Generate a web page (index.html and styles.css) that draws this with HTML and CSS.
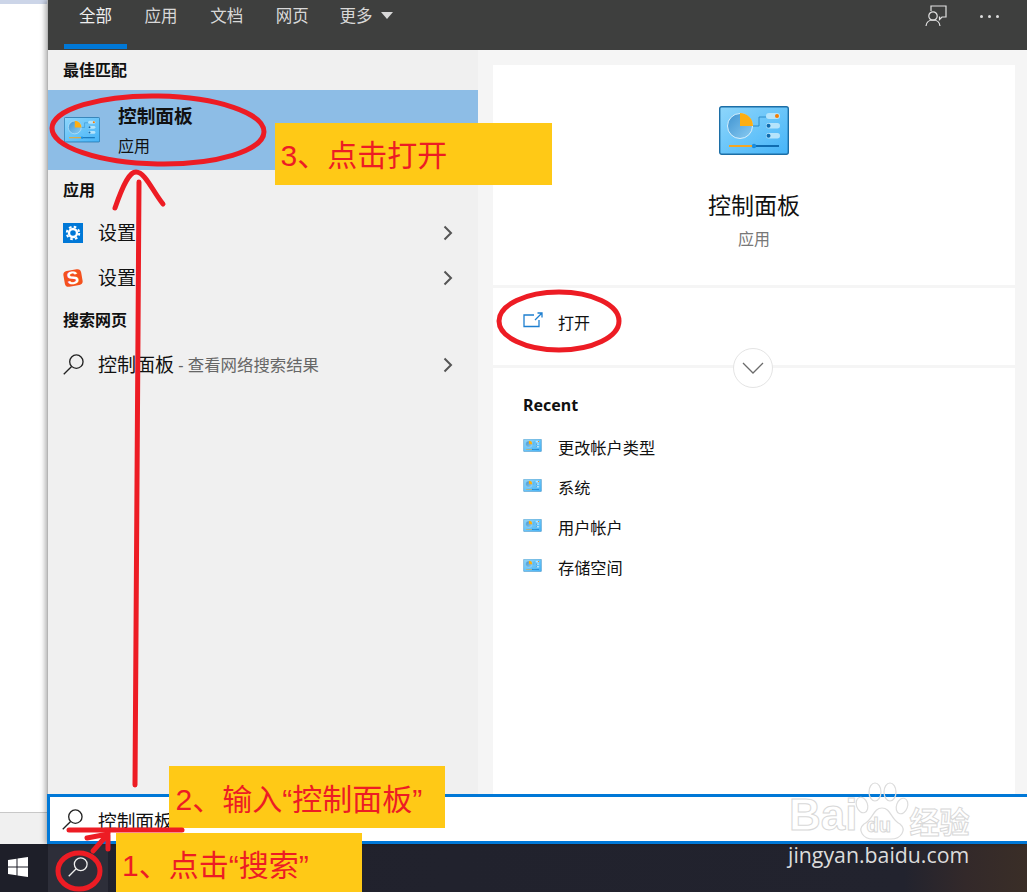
FILE: index.html
```html
<!DOCTYPE html>
<html lang="zh-CN">
<head>
    <meta charset="UTF-8">
    <meta name="viewport" content="width=device-width, initial-scale=1.0">
    <title>控制面板</title>
    <link rel="stylesheet" href="styles.css">
</head>
<body>
    <svg class="defs" width="0" height="0">
        <defs>
            <linearGradient id="cpFill" x1="0" y1="0" x2="1" y2="1">
                <stop offset="0" stop-color="#8ed6fb"/>
                <stop offset="1" stop-color="#45b4f8"/>
            </linearGradient>
            <linearGradient id="cpPie" x1="0" y1="0" x2="1" y2="1">
                <stop offset="0" stop-color="#3f93d0"/>
                <stop offset="1" stop-color="#8accf3"/>
            </linearGradient>
            <symbol id="cpIcon" viewBox="0 0 70 50">
                <rect x="0.7" y="0.7" width="68.6" height="47.6" rx="2" fill="url(#cpFill)" stroke="#1c6ea6" stroke-width="1.4"/>
                <circle cx="21" cy="20" r="12.5" fill="url(#cpPie)" stroke="#d8f0fc" stroke-width="1"/>
                <path d="M21 7 A13 13 0 0 1 34 20 L21 20 Z" fill="#fdae12"/>
                <path d="M34 20 H40 V11 H47" fill="none" stroke="#1f7dbd" stroke-width="0.8"/>
                <rect x="47" y="7" width="14" height="6" rx="3" fill="#b6e4fb"/>
                <rect x="47" y="17" width="14" height="5.5" rx="2.7" fill="#b6e4fb"/>
                <rect x="47" y="27" width="14" height="5.5" rx="2.7" fill="#b6e4fb"/>
                <circle cx="58" cy="10" r="2" fill="#f57c00"/>
                <circle cx="49.5" cy="19.7" r="2" fill="#0f6cb0"/>
                <circle cx="49.5" cy="29.7" r="2" fill="#0f6cb0"/>
                <rect x="10" y="39" width="25" height="2" fill="#f5a623"/>
                <rect x="35" y="39" width="25" height="2" fill="#0f6cb0"/>
                <circle cx="35" cy="40" r="2.2" fill="#1a8ee0"/>
            </symbol>
            <symbol id="searchIcon" viewBox="0 0 22 22">
                <circle cx="14" cy="8" r="7" fill="none" stroke="currentColor" stroke-width="1.4"/>
                <path d="M9 13 L0.8 21.2" fill="none" stroke="currentColor" stroke-width="1.4"/>
            </symbol>
            <symbol id="chevronIcon" viewBox="0 0 10 16">
                <path d="M1.5 1.5 L8 8 L1.5 14.5" fill="none" stroke="currentColor" stroke-width="2"/>
            </symbol>
        </defs>
    </svg>

    <div class="screen">
        <div class="desktop">
            <div class="window-strip">
                <div class="strip-top"></div>
                <div class="strip-body"></div>
                <div class="strip-bottom"></div>
            </div>

            <div class="panel">
                <div class="panel-header">
                    <div class="tabs">
                        <div class="tab active">全部</div>
                        <div class="tab">应用</div>
                        <div class="tab">文档</div>
                        <div class="tab">网页</div>
                        <div class="tab">更多<span class="caret"></span></div>
                    </div>
                    <div class="header-actions">
                        <svg class="feedback-icon" viewBox="0 0 22 22">
                            <path d="M6 6 V1 H21 V12 H17 L14.5 14.5 V11.5" fill="none" stroke="#e2e2e2" stroke-width="1.2"/>
                            <circle cx="8" cy="11" r="4.2" fill="none" stroke="#e2e2e2" stroke-width="1.2"/>
                            <path d="M1 21 C1.5 16.5 4.5 15 8 15 C11.5 15 14.5 16.5 15 21" fill="none" stroke="#e2e2e2" stroke-width="1.2"/>
                        </svg>
                        <div class="dots"><span></span><span></span><span></span></div>
                    </div>
                </div>

                <div class="panel-body">
                    <div class="results">
                        <div class="group-title">最佳匹配</div>
                        <div class="best-match">
                            <svg class="best-icon"><use href="#cpIcon"/></svg>
                            <div>
                                <div class="best-name">控制面板</div>
                                <div class="best-type">应用</div>
                            </div>
                        </div>

                        <div class="group-title">应用</div>
                        <div class="result-row">
                            <svg class="row-icon" viewBox="0 0 20 20">
                                <rect width="20" height="20" fill="#0078d7"/>
                                <circle cx="10" cy="10" r="4" fill="none" stroke="#fff" stroke-width="2.4"/>
                                <circle cx="10" cy="10" r="6.2" fill="none" stroke="#fff" stroke-width="2" stroke-dasharray="2.6 2.27"/>
                            </svg>
                            <span class="row-text">设置</span>
                            <svg class="row-arrow"><use href="#chevronIcon"/></svg>
                        </div>
                        <div class="result-row">
                            <svg class="row-icon" viewBox="0 0 20 20">
                                <rect x="1" y="2" width="18" height="16" rx="4" fill="#f4511e" transform="rotate(-10 10 10)"/>
                                <text class="sogou-s" x="10" y="16" text-anchor="middle" transform="rotate(-10 10 10)">S</text>
                            </svg>
                            <span class="row-text">设置</span>
                            <svg class="row-arrow"><use href="#chevronIcon"/></svg>
                        </div>

                        <div class="group-title">搜索网页</div>
                        <div class="result-row">
                            <svg class="row-icon search-glyph"><use href="#searchIcon"/></svg>
                            <span class="row-text">控制面板</span><span class="row-hint">&nbsp;- 查看网络搜索结果</span>
                            <svg class="row-arrow"><use href="#chevronIcon"/></svg>
                        </div>
                    </div>

                    <div class="preview">
                        <div class="card card-app">
                            <svg class="app-icon"><use href="#cpIcon"/></svg>
                            <div class="app-name">控制面板</div>
                            <div class="app-type">应用</div>
                        </div>
                        <div class="card card-open">
                            <svg class="open-icon" viewBox="0 0 20 16">
                                <path d="M11 3 H1 V14.5 H16 V8" fill="none" stroke="#1e7fd0" stroke-width="1.3"/>
                                <path d="M12 8 L18.5 1.5 M14.5 1 H19 V5.5" fill="none" stroke="#1e7fd0" stroke-width="1.3"/>
                            </svg>
                            <span>打开</span>
                        </div>
                        <div class="card card-recent">
                            <div class="expand">
                                <svg viewBox="0 0 22 12" width="22" height="12"><path d="M1 1 L11 11 L21 1" fill="none" stroke="#6b6b6b" stroke-width="1.3"/></svg>
                            </div>
                            <div class="recent-title">Recent</div>
                            <div class="recent-row"><svg class="recent-icon"><use href="#cpIcon"/></svg>更改帐户类型</div>
                            <div class="recent-row"><svg class="recent-icon"><use href="#cpIcon"/></svg>系统</div>
                            <div class="recent-row"><svg class="recent-icon"><use href="#cpIcon"/></svg>用户帐户</div>
                            <div class="recent-row"><svg class="recent-icon"><use href="#cpIcon"/></svg>存储空间</div>
                        </div>
                    </div>
                </div>

                <div class="search-box">
                    <svg class="search-box-icon"><use href="#searchIcon"/></svg>
                    <span>控制面板</span>
                </div>
            </div>
        </div>

        <div class="taskbar">
            <div class="start-btn">
                <svg viewBox="0 0 20 20" width="20" height="20">
                    <path d="M0 3 L8.5 1.8 V9.5 H0 Z M9.5 1.6 L20 0 V9.5 H9.5 Z M0 10.5 H8.5 V18.2 L0 17 Z M9.5 10.5 H20 V20 L9.5 18.4 Z" fill="#fff"/>
                </svg>
            </div>
            <div class="search-btn">
                <svg class="taskbar-search"><use href="#searchIcon"/></svg>
            </div>
        </div>

        <!-- annotations drawn on top of the screenshot -->
        <div class="note note-open">3、点击打开</div>
        <div class="note note-type">2、输入“控制面板”</div>
        <div class="note note-search">1、点击“搜索”</div>

        <svg class="marks" viewBox="0 0 1027 892">
            <ellipse cx="158" cy="130" rx="106" ry="34" transform="rotate(1 158 130)"/>
            <ellipse cx="559" cy="321" rx="60" ry="29"/>
            <ellipse cx="79" cy="871" rx="21" ry="18"/>
            <path d="M135 785 L139 182"/>
            <path d="M115 208 C124 182 130 172 136 172 C145 172 152 190 163 204"/>
            <path d="M69 830 H182"/>
            <path d="M87 838 L108 834 L108 849 M108 834 L93 851"/>
        </svg>

        <div class="watermark">
            <span class="wm-bai">Bai</span>
            <div class="wm-paw">
                <svg viewBox="0 0 54 58" width="54" height="58">
                    <g fill="none" stroke="#dcdcdc" stroke-width="1.2">
                        <ellipse cx="7" cy="23" rx="5.5" ry="8" transform="rotate(-20 7 23)"/>
                        <ellipse cx="20" cy="10" rx="6" ry="9"/>
                        <ellipse cx="35" cy="10" rx="6" ry="9"/>
                        <ellipse cx="47" cy="24" rx="5.5" ry="8" transform="rotate(20 47 24)"/>
                        <path d="M27 26 C18 26 18 38 9 42 C2 48 8 57 18 57 H36 C46 57 52 48 45 42 C36 38 36 26 27 26 Z"/>
                    </g>
                </svg>
                <span class="wm-du">du</span>
            </div>
            <span class="wm-jy">经验</span>
        </div>
        <div class="wm-url">jingyan.baidu.com</div>
    </div>
</body>
</html>
```
FILE: styles.css
```css
* {
    box-sizing: border-box;
}
body {
    margin: 0;
    overflow: hidden;
    font-family: "Noto Sans", "Noto Sans CJK SC", sans-serif;
    color: #111;
}
.defs {
    position: absolute;
}
.screen {
    position: relative;
    width: 1027px;
    height: 892px;
    display: flex;
    flex-direction: column;
    overflow: hidden;
    background: #fff;
}
.desktop {
    flex: 1;
    display: flex;
    min-height: 0;
}

/* window behind the start menu */
.window-strip {
    width: 47px;
    display: flex;
    flex-direction: column;
}
.strip-top {
    height: 4px;
    background: #ccd5e8;
}
.strip-body {
    flex: 1;
    background: #fff;
    border-bottom: 1px solid #c8c8c8;
}
.strip-bottom {
    height: 31px;
    background: #f0f0f0;
}

.panel {
    flex: 1;
    display: flex;
    flex-direction: column;
    min-width: 0;
    position: relative;
    box-shadow: -2px 0 5px rgba(0, 0, 0, 0.3);
    border-left: 1px solid #b5b5b5;
}
.panel-header {
    height: 50px;
    background: #3e3f3e;
    display: flex;
    justify-content: space-between;
}
.tabs {
    display: flex;
    padding-left: 16px;
}
.tab {
    width: 63px;
    margin-right: 2.6px;
    height: 49px;
    padding-top: 5px;
    text-align: center;
    font-size: 16.5px;
    line-height: 22px;
    color: #d8d8d8;
    white-space: nowrap;
}
.tab.active {
    color: #eee;
    border-bottom: 5px solid #0078d7;
}
.caret {
    display: inline-block;
    width: 0;
    height: 0;
    margin-left: 9px;
    vertical-align: 3px;
    border-left: 6.5px solid transparent;
    border-right: 6.5px solid transparent;
    border-top: 7px solid #d8d8d8;
}
.tab:last-child {
    width: 90px;
    text-align: left;
    padding-left: 13px;
}
.header-actions {
    display: flex;
    align-items: flex-start;
    padding-right: 28px;
}
.feedback-icon {
    width: 22px;
    height: 22px;
    margin-top: 5px;
}
.dots {
    display: flex;
    gap: 5px;
    margin: 15px 0 0 33px;
}
.dots span {
    width: 3px;
    height: 3px;
    background: #ddd;
    border-radius: 50%;
}

.panel-body {
    flex: 1;
    display: flex;
    min-height: 0;
}

/* left column */
.results {
    width: 430px;
    background: #f0f0f0;
}
.group-title {
    height: 40px;
    line-height: 40px;
    padding-left: 15px;
    font-size: 16px;
    font-weight: 700;
}
.best-match {
    height: 80px;
    background: #8dbde6;
    display: flex;
    align-items: center;
    padding-left: 16px;
}
.best-icon {
    width: 36px;
    height: 26px;
    margin-right: 18px;
}
.best-name {
    font-size: 18.7px;
    font-weight: 700;
    line-height: 26px;
}
.best-type {
    font-size: 16px;
    line-height: 22px;
    margin-top: 6px;
}
.result-row {
    height: 45px;
    display: flex;
    align-items: center;
    padding-left: 15px;
}
.result-row:last-child {
    margin-top: 2px;
}
.row-icon {
    width: 20px;
    height: 20px;
    margin-right: 15px;
    flex: none;
}
.search-glyph {
    color: #222;
    width: 21px;
    height: 21px;
    margin-right: 14px;
}
.sogou-s {
    font-family: "Liberation Sans", sans-serif;
    font-size: 18px;
    font-weight: 700;
    fill: #fff;
}
.row-text {
    font-size: 19px;
    margin-top: -2px;
}
.row-hint {
    font-size: 16.4px;
    color: #666;
    margin-top: -2px;
}
.row-arrow {
    width: 10px;
    height: 16px;
    margin-left: auto;
    margin-right: 25px;
    color: #555;
}

/* right column */
.preview {
    flex: 1;
    display: flex;
    flex-direction: column;
    gap: 3px;
    background: #f5f5f5;
    padding: 15px 12px 0 15px;
}
.card {
    background: #fff;
}
.card-app {
    height: 220px;
    display: flex;
    flex-direction: column;
    align-items: center;
    padding-top: 41px;
}
.app-icon {
    width: 70px;
    height: 50px;
}
.app-name {
    margin-top: 33px;
    font-size: 23px;
    line-height: 32px;
}
.app-type {
    margin-top: 7px;
    font-size: 16px;
    line-height: 22px;
    color: #777;
}
.card-open {
    height: 77px;
    display: flex;
    align-items: center;
    padding: 0 0 9px 30px;
    font-size: 16px;
}
.open-icon {
    width: 20px;
    height: 16px;
    margin: -4px 15px 0 0;
}
.card-recent {
    flex: 1;
    position: relative;
    padding: 25px 0 0 30px;
}
.expand {
    position: absolute;
    left: 240px;
    top: -20px;
    width: 40px;
    height: 40px;
    border-radius: 50%;
    background: #fff;
    border: 1px solid #e4e4e4;
    display: flex;
    align-items: center;
    justify-content: center;
}
.recent-title {
    font-size: 16px;
    font-weight: 700;
    line-height: 24px;
    margin-bottom: 10px;
}
.recent-row {
    height: 40px;
    display: flex;
    align-items: center;
    font-size: 16.2px;
}
.recent-icon {
    width: 19px;
    height: 13px;
    margin: -4px 16px 0 0;
}

.search-box {
    height: 50px;
    margin-left: -1px;
    background: #fff;
    border: 3px solid #0078d7;
    border-right: none;
    display: flex;
    align-items: center;
    padding-left: 12px;
    font-size: 18.7px;
}
.search-box-icon {
    width: 21px;
    height: 21px;
    margin-right: 15px;
    color: #222;
}

.taskbar {
    height: 48px;
    display: flex;
    background: linear-gradient(90deg, #20212c 0%, #22232e 88%, #33292a 94%, #3a2e27 100%);
}
.start-btn {
    width: 48px;
    display: flex;
    align-items: center;
    padding: 0 0 2px 8px;
    background: #1e1f29;
}
.search-btn {
    width: 60px;
    display: flex;
    align-items: center;
    justify-content: center;
    background: #2d2e39;
}
.taskbar-search {
    width: 20px;
    height: 20px;
    color: #f0f0f0;
    margin-bottom: 3px;
}

/* annotations */
.note {
    position: absolute;
    background: #ffc916;
    color: #ed1c24;
    font-family: "Liberation Sans", "Noto Sans CJK SC", sans-serif;
    font-size: 30px;
    white-space: nowrap;
}
.note-open {
    left: 275px;
    top: 123px;
    width: 277px;
    height: 62px;
    padding-left: 5.5px;
    line-height: 66px;
}
.note-type {
    left: 169px;
    top: 766px;
    width: 276px;
    height: 62px;
    padding-left: 6.5px;
    line-height: 68px;
}
.note-search {
    left: 116px;
    top: 833px;
    width: 246px;
    height: 59px;
    padding-left: 6px;
    line-height: 66px;
}
.marks {
    position: absolute;
    left: 0;
    top: 0;
    width: 1027px;
    height: 892px;
    fill: none;
    stroke: #ed1c24;
    stroke-width: 5;
    stroke-linecap: round;
    pointer-events: none;
}

.watermark {
    position: absolute;
    left: 789px;
    top: 782px;
    height: 58px;
    display: flex;
    align-items: flex-end;
    color: #fff;
    -webkit-text-stroke: 1px #d8d8d8;
}
.wm-bai {
    font-family: "Liberation Sans", sans-serif;
    font-size: 44px;
    font-weight: 700;
    line-height: 50px;
}
.wm-paw {
    position: relative;
    width: 54px;
    height: 58px;
    margin-left: -2px;
}
.wm-du {
    position: absolute;
    left: 11px;
    top: 33px;
    font-family: "Liberation Sans", sans-serif;
    font-size: 20px;
    font-weight: 700;
    line-height: 20px;
}
.wm-jy {
    font-family: "Noto Sans CJK SC", sans-serif;
    font-size: 30px;
    font-weight: 700;
    line-height: 40px;
    margin-left: 0;
}
.wm-url {
    position: absolute;
    left: 788px;
    top: 841px;
    font-family: "Open Sans", sans-serif;
    font-size: 21.3px;
    line-height: 28px;
    color: #dcdcdc;
    white-space: nowrap;
}
```
